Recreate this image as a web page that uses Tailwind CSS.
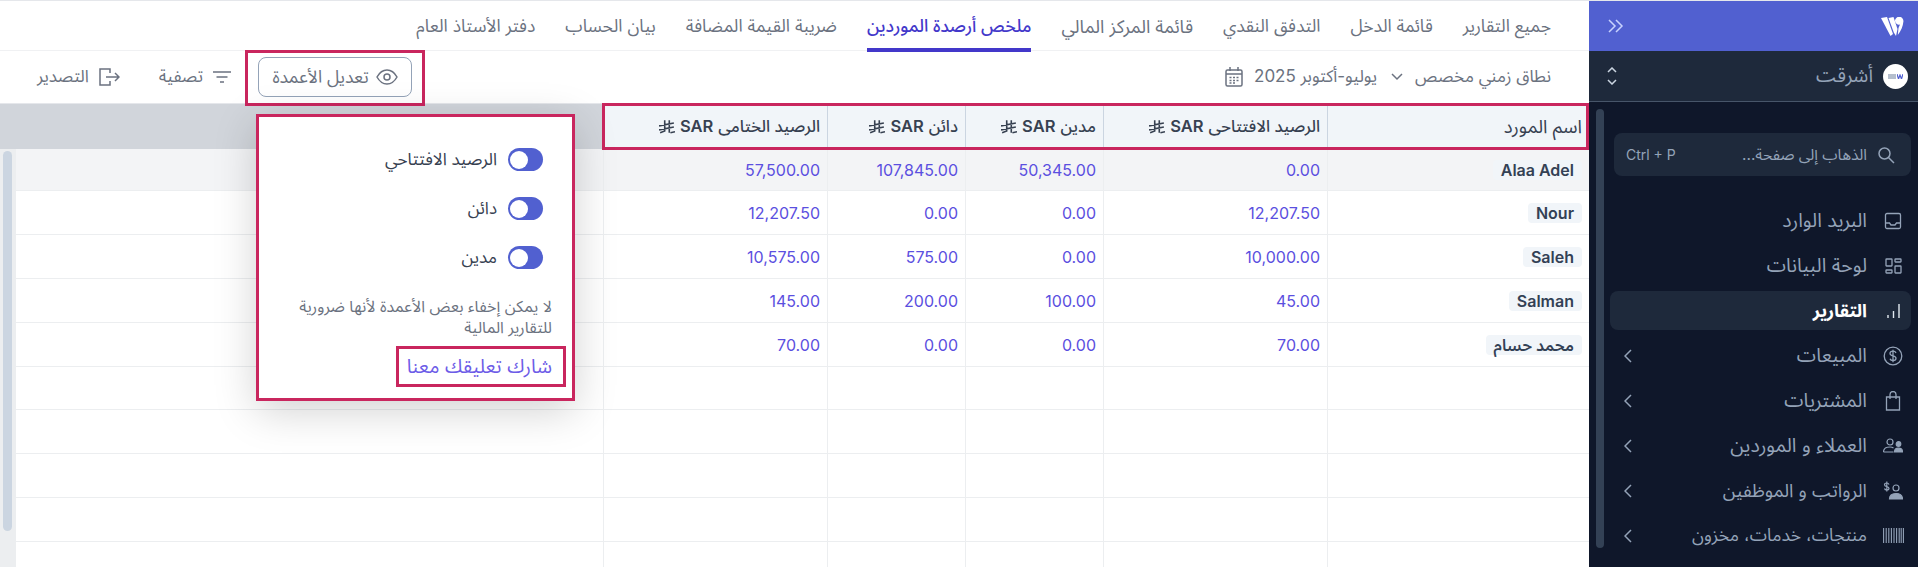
<!DOCTYPE html>
<html lang="ar" dir="rtl">
<head>
  <meta charset="UTF-8" />
  <title>ملخص أرصدة الموردين</title>
  <script src="https://cdn.jsdelivr.net/npm/@tailwindcss/browser@4"></script>
</head>
<body class="h-[567px] overflow-hidden flex border-t border-[#e5e7eb] bg-white text-[#374151] font-['Inter','Noto_Sans_Arabic','Noto_Sans','DejaVu_Sans',sans-serif]">

<!-- SIDEBAR -->
<aside class="relative w-[329px] shrink-0 bg-[#0f172a] text-[#94a3b8]">
  <div class="h-[50px] bg-[#5160d0] flex items-center justify-between pr-[14px] pl-[19px]">
    <svg class="w-[23px] h-[19px]" viewBox="0 0 23 19" fill="#fff"><path d="M0 1 L6 0 L12 17 L9.500 19 Z"/><path d="M7.500 1 L12.500 0 L16.500 12 L15 19 L12.800 15.500 Z"/><path d="M14 3.500 a4.200 4.200 0 1 1 8.400 1 C22 9 20 14 16.800 18 L17.500 11 L19 7.500 A4 4 0 0 1 14 3.500 Z"/></svg>
    <svg class="w-[16px] h-[14px]" viewBox="0 0 16 14" fill="none" stroke="#c7d2fe" stroke-width="1.5"><path d="M1 1l6 6-6 6M8 1l6 6-6 6"/></svg>
  </div>
  <div class="h-[51px] bg-[#1e293b] border-b border-[#475569] flex items-center pr-[10px] pl-[18px] gap-[10px]">
    <span class="w-[25px] h-[25px] rounded-full bg-white flex items-center justify-center gap-px" dir="ltr">
      <span class="w-[8px] h-[5px] bg-[#94a3b8]/70"></span>
      <svg class="w-[6px] h-[5px]" viewBox="0 0 6 5" fill="none" stroke="#5160d0" stroke-width="1.2"><path d="M0 0l1.5 5 1.5-4 1.5 4L6 0"/></svg>
    </span>
    <span class="flex-1 text-[19.5px]">أشرقت</span>
    <svg class="w-[10px] h-[18px]" viewBox="0 0 10 18" fill="none" stroke="#cbd5e1" stroke-width="1.5"><path d="M1 5l4-4 4 4M1 13l4 4 4-4"/></svg>
  </div>

  <!-- scrollbar -->
  <div class="absolute left-[7px] top-[108px] w-[8px] h-[439px] rounded-full bg-[#334155]"></div>

  <div class="h-[43px] mt-[31px] mr-[7px] ml-[25px] rounded-lg bg-[#1e293b] flex items-center gap-[10px] pr-[16px] pl-[12px]">
    <svg class="w-[18px] h-[18px]" viewBox="0 0 18 18" fill="none" stroke="#94a3b8" stroke-width="1.5"><circle cx="7.5" cy="7.5" r="5.5"/><path d="M11.5 11.5L17 17"/></svg>
    <span class="flex-1 text-[15.5px]">الذهاب إلى صفحة...</span>
    <span class="text-[14px]" dir="ltr">Ctrl + P</span>
  </div>

  <nav class="mt-[25px] mr-[7px] ml-[21px] flex flex-col gap-[6px] text-[19.5px]">
    <a class="h-[39px] flex items-center gap-[16px] pr-[8px] pl-[14px] rounded-lg">
      <svg class="w-[20px] h-[20px]" viewBox="0 0 20 20" fill="none" stroke="#94a3b8" stroke-width="1.3"><rect x="2.5" y="2.5" width="15" height="15" rx="1.5"/><path d="M2.5 12h4l1.5 2h4l1.5-2h4"/></svg>
      <span class="flex-1">البريد الوارد</span>
    </a>
    <a class="h-[39px] flex items-center gap-[16px] pr-[8px] pl-[14px] rounded-lg">
      <svg class="w-[20px] h-[20px]" viewBox="0 0 20 20" fill="none" stroke="#94a3b8" stroke-width="1.3"><rect x="3" y="3" width="6" height="7" rx=".5"/><rect x="12" y="3" width="6" height="3" rx=".5"/><rect x="3" y="14" width="6" height="3" rx=".5"/><rect x="12" y="10" width="6" height="7" rx=".5"/></svg>
      <span class="flex-1">لوحة البيانات</span>
    </a>
    <a class="h-[39px] flex items-center gap-[16px] pr-[8px] pl-[14px] rounded-lg bg-[#1e293b] text-white font-bold">
      <svg class="w-[20px] h-[20px]" viewBox="0 0 20 20" fill="none" stroke="#e2e8f0" stroke-width="1.4"><path d="M16 3v14M10.5 10v7M5 14v3"/></svg>
      <span class="flex-1 text-[18px]">التقارير</span>
    </a>
    <a class="h-[39px] flex items-center gap-[16px] pr-[8px] pl-[14px] rounded-lg">
      <svg class="w-[20px] h-[20px]" viewBox="0 0 20 20" fill="none" stroke="#94a3b8" stroke-width="1.3"><circle cx="10" cy="10" r="8.8"/><path d="M13 7c-.5-1.2-1.6-1.8-3-1.8-1.8 0-3 1-3 2.3 0 3.2 6 1.600 6 4.800 0 1.300-1.300 2.400-3 2.400-1.500 0-2.600-.7-3-1.900M10 3.800v12.400"/></svg>
      <span class="flex-1">المبيعات</span>
      <svg class="w-[8px] h-[14px]" viewBox="0 0 8 14" fill="none" stroke="#94a3b8" stroke-width="1.5"><path d="M7 1L1 7l6 6"/></svg>
    </a>
    <a class="h-[39px] flex items-center gap-[16px] pr-[8px] pl-[14px] rounded-lg">
      <svg class="w-[20px] h-[20px]" viewBox="0 0 20 20" fill="none" stroke="#94a3b8" stroke-width="1.3"><path d="M3.500 6h13v13h-13zM7 8V3.500a3 3 0 0 1 6 0V8"/></svg>
      <span class="flex-1">المشتريات</span>
      <svg class="w-[8px] h-[14px]" viewBox="0 0 8 14" fill="none" stroke="#94a3b8" stroke-width="1.5"><path d="M7 1L1 7l6 6"/></svg>
    </a>
    <a class="h-[39px] flex items-center gap-[16px] pr-[8px] pl-[14px] rounded-lg">
      <svg class="w-[20px] h-[20px]" viewBox="0 0 20 20" fill="none" stroke="#94a3b8" stroke-width="1.2"><circle cx="7" cy="6" r="3"/><path d="M0.500 16c0-3.500 3-5 6.500-5 1.500 0 2.500.3 3.500 1M0.500 16h10"/><circle cx="15.500" cy="8" r="2.300" fill="#94a3b8"/><path d="M11.500 16c0-2.500 2-3.800 4-3.800s4 1.300 4 3.800z" fill="#94a3b8"/></svg>
      <span class="flex-1">العملاء و الموردين</span>
      <svg class="w-[8px] h-[14px]" viewBox="0 0 8 14" fill="none" stroke="#94a3b8" stroke-width="1.5"><path d="M7 1L1 7l6 6"/></svg>
    </a>
    <a class="h-[39px] flex items-center gap-[16px] pr-[8px] pl-[14px] rounded-lg">
      <svg class="w-[20px] h-[20px]" viewBox="0 0 20 20" fill="none" stroke="#94a3b8" stroke-width="1.2"><path d="M6 3.500C5.500 2.500 4.800 2 3.800 2 2.500 2 1.500 2.700 1.500 3.800c0 2.400 4.500 1.200 4.500 3.500C6 8.400 5 9 3.800 9 2.700 9 1.800 8.500 1.500 7.500M3.800 .5v10"/><circle cx="13" cy="7" r="3"/><path d="M6.500 18c0-4 3-5.500 6.500-5.500s6.500 1.500 6.500 5.500z" fill="#94a3b8"/></svg>
      <span class="flex-1 text-[18.5px]">الرواتب و الموظفين</span>
      <svg class="w-[8px] h-[14px]" viewBox="0 0 8 14" fill="none" stroke="#94a3b8" stroke-width="1.5"><path d="M7 1L1 7l6 6"/></svg>
    </a>
    <a class="h-[39px] flex items-center gap-[16px] pr-[7px] pl-[14px] rounded-lg">
      <svg class="w-[21px] h-[15px]" viewBox="0 0 21 15" fill="none" stroke="#94a3b8" stroke-width="1.1"><path d="M.6 0v15M3.200 0v15M5.800 0v15M8.400 0v15M11 0v15M13.600 0v15M16.200 0v15M18.200 0v15M20.400 0v15"/></svg>
      <span class="flex-1 text-[17.5px]">منتجات، خدمات، مخزون</span>
      <svg class="w-[8px] h-[14px]" viewBox="0 0 8 14" fill="none" stroke="#94a3b8" stroke-width="1.5"><path d="M7 1L1 7l6 6"/></svg>
    </a>
  </nav>
</aside>

<!-- MAIN -->
<main class="relative flex-1 min-w-0 flex flex-col">
  <!-- tabs -->
  <div class="h-[50px] shrink-0 border-b border-[#f0f1f3] flex gap-[30px] pr-[38px] text-[17.5px] text-[#6b7280]">
    <a class="h-[50px] pt-[12px]">جميع التقارير</a>
    <a class="h-[50px] pt-[12px]">قائمة الدخل</a>
    <a class="h-[50px] pt-[12px]">التدفق النقدي</a>
    <a class="h-[50px] pt-[12px] text-[18.2px]">قائمة المركز المالي</a>
    <a class="h-[51px] pt-[12px] border-b-[4px] border-[#4338ca] text-[#4338ca] font-medium">ملخص أرصدة الموردين</a>
    <a class="h-[50px] pt-[12px]">ضريبة القيمة المضافة</a>
    <a class="h-[50px] pt-[12px]">بيان الحساب</a>
    <a class="h-[50px] pt-[12px]">دفتر الأستاذ العام</a>
  </div>

  <!-- toolbar -->
  <div class="h-[53px] shrink-0 border-b border-[#e5e7eb] flex items-center justify-between pr-[38px] pl-[37px] text-[17px] text-[#6b7280]">
    <div class="flex items-center gap-[12px]">
      <span>نطاق زمني مخصص</span>
      <svg class="w-[12px] h-[8px]" viewBox="0 0 12 8" fill="none" stroke="#6b7280" stroke-width="1.5"><path d="M1 1l5 5 5-5"/></svg>
      <span class="mr-[2px] flex items-center gap-[11px]">
        <span>يوليو-أكتوبر 2025</span>
        <svg class="w-[18px] h-[20px]" viewBox="0 0 18 20" fill="none" stroke="#6b7280" stroke-width="1.5"><rect x="1" y="3" width="16" height="16" rx="1.500"/><path d="M1 7h16M5 0v4M13 0v4"/><path d="M4.500 10.500h2M8 10.500h2M11.500 10.500h2M4.500 13.500h2M8 13.500h2M11.500 13.500h2M4.500 16h2M8 16h2" stroke-width="1.300"/></svg>
      </span>
    </div>
    <div class="flex items-center">
      <button class="h-[40px] w-[154px] shrink-0 rounded-lg border border-[#94a3b8] flex items-center justify-center gap-[7px] text-[17.5px]">
        <svg class="w-[22px] h-[16px] shrink-0" viewBox="0 0 22 16" fill="none" stroke="#6b7280" stroke-width="1.500"><path d="M1 8c2.500-4.500 6-7 10-7s7.500 2.500 10 7c-2.500 4.500-6 7-10 7S3.500 12.500 1 8z"/><circle cx="11" cy="8" r="3"/></svg>
        <span class="whitespace-nowrap">تعديل الأعمدة</span>
      </button>
      <span class="mr-[27px] flex items-center gap-[10px]">
        <svg class="w-[18px] h-[12px]" viewBox="0 0 18 12" fill="none" stroke="#6b7280" stroke-width="1.500"><path d="M0 1h18M3.500 6h11M7 11h4"/></svg>
        <span>تصفية</span>
      </span>
      <span class="mr-[39px] flex items-center gap-[10px]">
        <svg class="w-[21px] h-[18px]" viewBox="0 0 21 18" fill="none" stroke="#6b7280" stroke-width="1.500"><path d="M11 5V1H1v16h10v-4M7 9h13M16 5l4 4-4 4"/></svg>
        <span>التصدير</span>
      </span>
    </div>
  </div>

  <!-- table head -->
  <div class="h-[45px] shrink-0 bg-[#d1d5db] flex">
    <div class="w-[986px] grid grid-cols-[262px_224px_138px_138px_224px] bg-[#f1f5f9] text-[16.5px] font-medium text-[#374151]">
      <div class="flex items-center pr-[7px] border-l border-[#cbd5e1] font-normal text-[18.5px]">اسم المورد</div>
      <div class="flex items-center gap-[5px] pr-[7px] border-l border-[#cbd5e1]">الرصيد الافتتاحى <span dir="ltr" class="font-semibold">SAR</span>
        <svg class="w-[16px] h-[14px]" viewBox="0 0 14 12" fill="none" stroke="#374151" stroke-width="1.400"><path d="M5 0v9.500L1 11M9 0v11M0 5l13-2.500M0 8.500l13-2.500M10 11l4-.8"/></svg></div>
      <div class="flex items-center gap-[5px] pr-[7px] border-l border-[#cbd5e1]">مدين <span dir="ltr" class="font-semibold">SAR</span>
        <svg class="w-[16px] h-[14px]" viewBox="0 0 14 12" fill="none" stroke="#374151" stroke-width="1.400"><path d="M5 0v9.500L1 11M9 0v11M0 5l13-2.500M0 8.500l13-2.500M10 11l4-.8"/></svg></div>
      <div class="flex items-center gap-[5px] pr-[7px] border-l border-[#cbd5e1]">دائن <span dir="ltr" class="font-semibold">SAR</span>
        <svg class="w-[16px] h-[14px]" viewBox="0 0 14 12" fill="none" stroke="#374151" stroke-width="1.400"><path d="M5 0v9.500L1 11M9 0v11M0 5l13-2.500M0 8.500l13-2.500M10 11l4-.8"/></svg></div>
      <div class="flex items-center gap-[5px] pr-[7px]">الرصيد الختامى <span dir="ltr" class="font-semibold">SAR</span>
        <svg class="w-[16px] h-[14px]" viewBox="0 0 14 12" fill="none" stroke="#374151" stroke-width="1.400"><path d="M5 0v9.500L1 11M9 0v11M0 5l13-2.500M0 8.500l13-2.500M10 11l4-.8"/></svg></div>
    </div>
  </div>

  <!-- table body -->
  <div class="flex-1 min-h-0 flex">
    <div class="flex-1 grid grid-cols-[262px_224px_138px_138px_224px_1fr] grid-rows-[42.4px] auto-rows-[43.8px] text-[16px] text-[#5b4fe0] [&>div]:border-b [&>div]:border-l [&>div]:border-[#eceef0] [&>div]:flex [&>div]:items-center [&>div]:pr-[7px] [&>div]:pt-px [&>div:nth-child(-n+6)]:bg-[#f3f4f6]">
      <div><span class="px-[8px] h-[20px] flex items-center rounded bg-[#f1f5f9] text-[#334155] font-semibold">Alaa Adel</span></div>
      <div>0.00</div><div>50,345.00</div><div>107,845.00</div><div>57,500.00</div><div></div>

      <div><span class="px-[8px] h-[20px] flex items-center rounded bg-[#f1f5f9] text-[#334155] font-semibold">Nour</span></div>
      <div>12,207.50</div><div>0.00</div><div>0.00</div><div>12,207.50</div><div></div>

      <div><span class="px-[8px] h-[20px] flex items-center rounded bg-[#f1f5f9] text-[#334155] font-semibold">Saleh</span></div>
      <div>10,000.00</div><div>0.00</div><div>575.00</div><div>10,575.00</div><div></div>

      <div><span class="px-[8px] h-[20px] flex items-center rounded bg-[#f1f5f9] text-[#334155] font-semibold">Salman</span></div>
      <div>45.00</div><div>100.00</div><div>200.00</div><div>145.00</div><div></div>

      <div><span class="px-[8px] h-[20px] flex items-center rounded bg-[#f1f5f9] text-[#334155] font-semibold">محمد حسام</span></div>
      <div>70.00</div><div>0.00</div><div>0.00</div><div>70.00</div><div></div>

      <div></div><div></div><div></div><div></div><div></div><div></div>
      <div></div><div></div><div></div><div></div><div></div><div></div>
      <div></div><div></div><div></div><div></div><div></div><div></div>
      <div></div><div></div><div></div><div></div><div></div><div></div>
      <div></div><div></div><div></div><div></div><div></div><div></div>
    </div>
    <!-- table scrollbar -->
    <div class="w-[15px] shrink-0 bg-[#eceef0] pt-[2px] px-[3px]">
      <div class="h-[380px] rounded-full bg-[#cbd5e1]"></div>
    </div>
  </div>

  <!-- annotation frames -->
  <div class="absolute left-[245px] top-[49px] w-[180px] h-[56px] border-[3px] border-[#c9265e]"></div>
  <div class="absolute left-[602px] top-[102px] w-[987px] h-[47px] border-[3px] border-[#c9265e]"></div>

  <!-- column menu -->
  <div class="absolute left-[256px] top-[113px] w-[319px] h-[287px] border-[3px] border-[#c9265e] bg-white shadow-[0_10px_40px_rgba(0,0,0,0.18)] pt-[31px] pr-[20px]">
    <div class="flex flex-col gap-[26px] pr-[9px] text-[17px] text-[#374151]">
      <label class="h-[23px] flex items-center gap-[11px]">
        <span class="w-[35px] h-[23px] rounded-full bg-[#5160d0] flex items-center justify-end px-[2px]"><span class="w-[18px] h-[18px] rounded-full bg-white"></span></span>
        الرصيد الافتتاحي
      </label>
      <label class="h-[23px] flex items-center gap-[11px]">
        <span class="w-[35px] h-[23px] rounded-full bg-[#5160d0] flex items-center justify-end px-[2px]"><span class="w-[18px] h-[18px] rounded-full bg-white"></span></span>
        دائن
      </label>
      <label class="h-[23px] flex items-center gap-[11px]">
        <span class="w-[35px] h-[23px] rounded-full bg-[#5160d0] flex items-center justify-end px-[2px]"><span class="w-[18px] h-[18px] rounded-full bg-white"></span></span>
        مدين
      </label>
    </div>
    <p class="mt-[27px] pl-[20px] text-[15.9px] leading-[21px] text-[#6b7280]">لا يمكن إخفاء بعض الأعمدة لأنها ضرورية للتقارير المالية</p>
    <a class="-mr-[14px] mt-[8px] w-[170px] h-[41px] border-[3px] border-[#c9265e] pr-[11px] flex items-center text-[19.5px] text-[#6d5ce7]">شارك تعليقك معنا</a>
  </div>
</main>

</body>
</html>
